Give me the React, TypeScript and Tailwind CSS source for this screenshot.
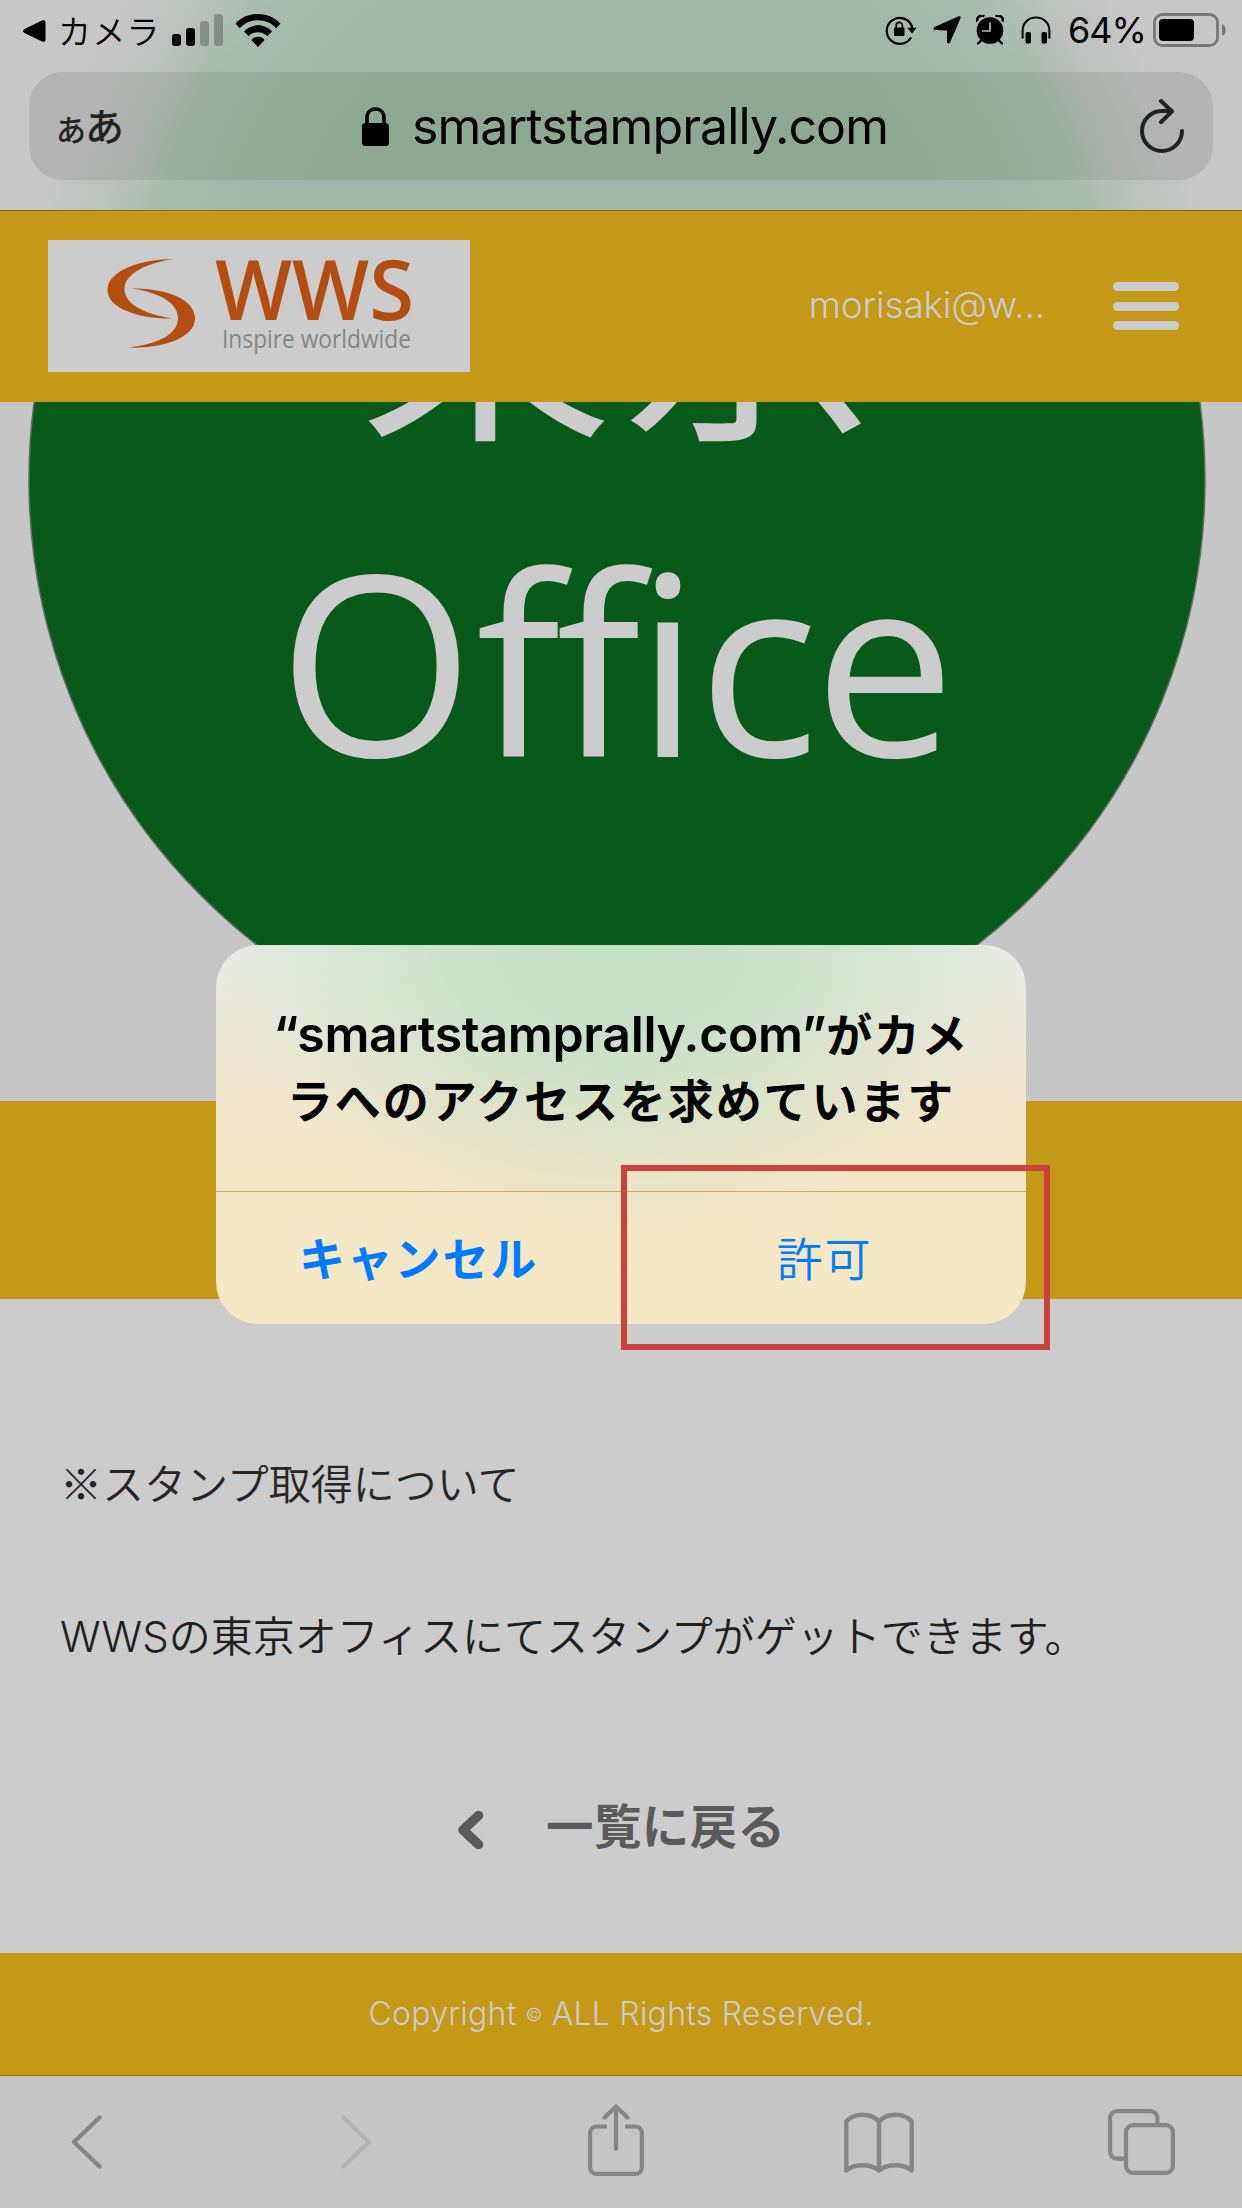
import React from "react";

interface IconProps {
  className?: string;
}

const WifiIcon = ({ className }: IconProps) => (
  <svg className={className} viewBox="0 0 46 33" fill="currentColor">
    <path d="M23 0C32 0 40 3.600 45.500 9.600L41.200 14.200C36.500 9 30 6.300 23 6.300S9.500 9 4.800 14.200L0.500 9.600C6 3.600 14 0 23 0Z" />
    <path d="M23 11.300C28.500 11.300 33.500 13.600 37 17.400L32.400 22C29.800 19.500 26.600 18.200 23 18.200S16.200 19.500 13.600 22L9 17.400C12.500 13.600 17.500 11.300 23 11.300Z" />
    <path d="M23 22.700C25.600 22.700 28 23.900 29.600 25.900L23 33L16.400 25.900C18 23.900 20.400 22.700 23 22.700Z" />
  </svg>
);

const RotationLockIcon = ({ className }: IconProps) => (
  <svg className={className} viewBox="0 0 32 30" fill="none" stroke="currentColor">
    <path d="M26 22.500A13 13 0 1 1 26.600 10.500L27.300 13" strokeWidth="2.200" />
    <path d="M22.200 12.800H31.500L27 18.500Z" fill="currentColor" stroke="none" />
    <rect x="9" y="12.500" width="10.500" height="8.500" rx="1" fill="currentColor" stroke="none" />
    <path d="M11.200 13V10.500a3.100 3.100 0 0 1 6.200 0V13" strokeWidth="1.600" />
  </svg>
);

const LocationIcon = ({ className }: IconProps) => (
  <svg className={className} viewBox="0 0 28 28" fill="currentColor">
    <path d="M25.800 0.300C27.200-.2 28 .8 27.500 2.200L17 26.600C16.300 28 14.200 27.700 14.100 26.100L13.900 14.500L2 13.900C.3 13.800-.1 11.800 1.500 11Z" />
  </svg>
);

const AlarmIcon = ({ className }: IconProps) => (
  <svg className={className} viewBox="0 0 28 30">
    <circle cx="14" cy="15.500" r="13.300" fill="currentColor" />
    <path d="M1.500 6.500C0 3 3.500-.5 8.500 1M26.500 6.500C28 3 24.500-.5 19.500 1" stroke="currentColor" strokeWidth="2.600" fill="none" />
    <path d="M5 25.500L2 28.500M23 25.500L26 28.500" stroke="currentColor" strokeWidth="2.200" strokeLinecap="round" />
    <path d="M14 7.500V16H6" stroke="#a9b8ae" strokeWidth="1.700" fill="none" />
  </svg>
);

const HeadphonesIcon = ({ className }: IconProps) => (
  <svg className={className} viewBox="0 0 30 28">
    <path d="M1.600 22.500V15C1.600 7 7.500 1.600 15 1.600S28.400 7 28.400 15V22.500" stroke="currentColor" strokeWidth="2" fill="none" />
    <rect x="4.500" y="16" width="5.500" height="11.500" rx="1.500" fill="currentColor" />
    <rect x="20.500" y="16" width="5.500" height="11.500" rx="1.500" fill="currentColor" />
  </svg>
);

const BatteryIcon = ({ className }: IconProps) => (
  <svg className={className} viewBox="0 0 74 34">
    <rect x="1.500" y="1.500" width="63" height="31" rx="8" fill="none" stroke="#777" strokeWidth="2.800" />
    <rect x="6" y="6" width="35" height="22" rx="4" fill="#000" />
    <path d="M69 11C74 13 74 21 69 23Z" fill="#777" />
  </svg>
);

const LockIcon = ({ className }: IconProps) => (
  <svg className={className} viewBox="0 0 27 39">
    <rect x="0" y="16" width="27" height="23" rx="3.500" fill="currentColor" />
    <path d="M5 17.500V11C5 5.500 8.500 2 13.500 2S22 5.500 22 11V17.500" stroke="currentColor" strokeWidth="3.600" fill="none" />
  </svg>
);

const ReloadIcon = ({ className }: IconProps) => (
  <svg className={className} viewBox="0 0 44 54" fill="none" stroke="currentColor" strokeWidth="4" strokeLinecap="round" strokeLinejoin="round">
    <path d="M42 32A20 20 0 1 1 22 12H31.500" />
    <path d="M21 2L32 12.500L21 23" />
  </svg>
);

const Logo = () => (
  <svg className="w-[422px] h-[132px] bg-[#ccc]" viewBox="0 0 422 132">
    <path
      d="M126 19C92 19 59.500 31 59.500 50C59.500 68 90 79 124 78.500C98 74 76.500 65 76.500 49C76.500 34 98 23 126 19Z"
      fill="#b34e12"
    />
    <path
      d="M84 48.500C119 48.500 147 59 147 78.500C147 98 114 109 79 107.500C106 105 130 96 130 78C130 62 109 52 84 48.500Z"
      fill="#b34e12"
    />
    <text
      x="167"
      y="80"
      fontSize="84"
      fontWeight="650"
      fill="#b34e12"
      textLength="199"
      lengthAdjust="spacingAndGlyphs"
      className="font-['Open_Sans',sans-serif]"
    >
      WWS
    </text>
    <text
      x="174"
      y="108"
      fontSize="25"
      fill="#868686"
      textLength="189"
      lengthAdjust="spacingAndGlyphs"
      className="font-['Open_Sans',sans-serif]"
    >
      Inspire worldwide
    </text>
  </svg>
);

/* Round stamp, its upper part scrolled under the header */
const Stamp = () => (
  <svg className="w-[1242px] h-[699px]" viewBox="0 402 1242 699">
    <circle cx="617" cy="480" r="588" fill="#085a1a" stroke="#5f6b60" strokeWidth="1.500" />
    <text x="358 619" y="420" fontSize="256" fill="#ccc" className="font-['Noto_Sans_CJK_JP',sans-serif]">
      東京
    </text>
    <text
      x="278 476 556 636 698 814"
      y="757"
      fontSize="252"
      fill="#ccc"
      className="font-['Open_Sans',sans-serif] [font-variant-ligatures:none]"
    >
      Office
    </text>
  </svg>
);

const signalBars = [
  "h-3 bg-black",
  "h-[18px] bg-black",
  "h-[25px] bg-black/25",
  "h-8 bg-black/25",
];

const StatusBar = () => (
  <div className="flex h-16 justify-between pl-[23px] pr-[15px] pt-[13px] text-black">
    <div className="flex h-[34px] items-center">
      <svg className="w-[23px] h-6 mt-0.5" viewBox="0 0 23 24">
        <path d="M1.500 10L19 1.500C21 .7 22.500 1.500 22.500 3.500V20.500C22.500 22.500 21 23.300 19 22.500L1.500 14C-.5 12.800-.5 11.200 1.500 10Z" />
      </svg>
      <span className="ml-3 text-[33px] leading-[34px] tracking-[1.200px] font-['Noto_Sans_CJK_JP',sans-serif] font-[350]">
        カメラ
      </span>
      <div className="ml-[11px] flex h-8 items-end gap-[5px]">
        {signalBars.map((bar) => (
          <div key={bar} className={`w-[9px] rounded-[3px] ${bar}`} />
        ))}
      </div>
      <WifiIcon className="ml-3 w-[46px] h-[33px]" />
    </div>
    <div className="flex h-[34px] items-center">
      <RotationLockIcon className="w-8 h-[30px]" />
      <LocationIcon className="ml-4 w-7 h-7" />
      <AlarmIcon className="ml-[15px] w-7 h-[30px]" />
      <HeadphonesIcon className="ml-[17px] w-[30px] h-7" />
      <span className="ml-[17px] w-[85px] whitespace-nowrap text-4xl leading-[34px] tracking-[-1px] font-['Inter',sans-serif]">
        64%
      </span>
      <BatteryIcon className="w-[74px] h-[34px]" />
    </div>
  </div>
);

const AddressBar = () => (
  <div className="mx-[29px] mt-2 flex h-[108px] items-center justify-between rounded-[34px] pl-[27px] pr-[29px] bg-[radial-gradient(circle_600px_at_592px_248px,#8da993_58%,#98ad9e_76%,#abb0ac_86%,#b4b4b4_97%)]">
    <div className="-mt-1 flex w-24 items-baseline text-[#222] font-medium leading-none font-['Noto_Sans_CJK_JP',sans-serif]">
      <span className="text-[30px]">あ</span>
      <span className="-ml-px text-[39px]">あ</span>
    </div>
    <div className="ml-2.5 flex items-center text-black">
      <LockIcon className="w-[27px] h-[39px]" />
      <span className="ml-[23px] text-[50px] leading-none tracking-[-0.900px] font-['Inter',sans-serif]">
        smartstamprally.com
      </span>
    </div>
    <div className="flex w-24 justify-end text-[#222]">
      <ReloadIcon className="w-11 h-[54px]" />
    </div>
  </div>
);

const SiteHeader = () => (
  <header className="flex h-[191px] items-start justify-between bg-[#c59918] pl-12 pr-[63px] pt-[29px]">
    <Logo />
    <div className="flex h-[132px] items-center">
      <span className="-mt-1 text-[37px] leading-none font-light tracking-[-0.200px] text-[#ccc] font-['Inter',sans-serif]">
        morisaki@w...
      </span>
      <button className="ml-[68px] flex flex-col gap-[10.500px]">
        <span className="h-[9px] w-[66px] rounded-full bg-[#ccc]" />
        <span className="h-[9px] w-[66px] rounded-full bg-[#ccc]" />
        <span className="h-[9px] w-[66px] rounded-full bg-[#ccc]" />
      </button>
    </div>
  </header>
);

const CameraDialog = () => (
  <div className="absolute left-1/2 top-[945px] flex h-[379px] w-[810px] -translate-x-1/2 flex-col overflow-hidden rounded-[42px] bg-[radial-gradient(ellipse_400px_290px_at_50%_0,#c5dec6_12%,#c5dec6c0_42%,#c5dec650_74%,#c5dec600_100%),linear-gradient(to_bottom,#e8ebe4_0%,#ebe9dc_20%,#f1e7cd_40%,#f3e7c6_60%,#f5e8c4_100%)] font-['Inter','Noto_Sans_CJK_JP',sans-serif]">
    <div className="h-[246px] pt-[56px] text-center font-semibold text-black">
      <p className="whitespace-nowrap text-[50px] leading-[66px] tracking-[-0.350px]">
        “smartstamprally.com”<span className="text-[46px] tracking-[1.500px]">がカメ</span>
      </p>
      <p className="text-[46px] leading-[66px] tracking-[1.900px]">ラへのアクセスを求めています</p>
    </div>
    <div className="grid flex-1 grid-cols-2 border-t border-[#c4ad72] pt-0.5 text-[46px] tracking-[1.800px] text-[#007aff]">
      <button className="font-semibold">キャンセル</button>
      <button className="pl-0.5 font-[350]">許可</button>
    </div>
  </div>
);

const Toolbar = () => (
  <nav className="flex h-[133px] items-start border-t border-[#8a6d1c] bg-[#c5c5c5] pl-[71px] pt-[28px] text-[#868686]">
    <svg className="mt-[11px] w-[31px] h-[54px]" viewBox="0 0 31 54" fill="none" stroke="currentColor" strokeWidth="4.500" strokeLinecap="round" strokeLinejoin="round">
      <path d="M28.500 2.500L3 27L28.500 51.500" />
    </svg>
    <svg className="ml-[239px] mt-[11px] w-[31px] h-[54px] text-[#b4b4b4]" viewBox="0 0 31 54" fill="none" stroke="currentColor" strokeWidth="4.500" strokeLinecap="round" strokeLinejoin="round">
      <path d="M2.500 2.500L28 27L2.500 51.500" />
    </svg>
    <svg className="ml-[216px] w-14 h-[72px]" viewBox="0 0 56 72" fill="none" stroke="currentColor" strokeWidth="4.200">
      <path d="M19 22.500H8.500A6.500 6.500 0 0 0 2.100 29V63.500A6.500 6.500 0 0 0 8.500 69.900H47.500A6.500 6.500 0 0 0 53.900 63.500V29A6.500 6.500 0 0 0 47.500 22.500H37" />
      <path d="M28 45V3M16.500 13.500L28 2.500L39.500 13.500" strokeLinecap="round" strokeLinejoin="round" />
    </svg>
    <svg className="ml-[200px] mt-2 w-[70px] h-[61px]" viewBox="0 0 70 61" fill="none" stroke="currentColor" strokeWidth="4.400" strokeLinejoin="round">
      <path d="M2.300 58.500V9.500C10 .5 27 .5 35 9.500C43 .5 60 .5 67.700 9.500V58.500C60 51.500 43 51.500 35 58.500C27 51.500 10 51.500 2.300 58.500ZM35 9.500V58.500" />
    </svg>
    <svg className="ml-[194px] mt-[5px] w-[67px] h-[66px]" viewBox="0 0 67 66" fill="none" stroke="currentColor" strokeWidth="4.200">
      <path d="M17 49.700H9A6.900 6.900 0 0 1 2.100 42.800V9A6.900 6.900 0 0 1 9 2.100H42.500A6.900 6.900 0 0 1 49.400 9V15.500" />
      <rect x="18" y="16.200" width="46.900" height="47.700" rx="6.900" />
    </svg>
  </nav>
);

export default function App() {
  return (
    <div className="relative flex h-[2208px] w-[1242px] flex-col overflow-hidden bg-[#ccc]">
      {/* Browser chrome */}
      <div className="h-[211px] border-b border-[#7d671f] bg-[radial-gradient(circle_600px_at_621px_320px,#a0b6a8_60%,#a7baad_78%,#bcc2be_88%,#c7c7c7_99%)]">
        <StatusBar />
        <AddressBar />
      </div>

      <SiteHeader />

      {/* Page content */}
      <main className="flex flex-1 flex-col font-['Inter','Noto_Sans_CJK_JP',sans-serif]">
        <div className="h-[699px] bg-[#c6c6c6]">
          <Stamp />
        </div>
        <div className="h-[198px] bg-[#c59918]" />
        <section className="pl-[60px] pt-[153px] text-[42px] font-[350] leading-[60px] text-[#262626]">
          <p className="font-['Noto_Sans_CJK_JP',sans-serif]">※スタンプ取得について</p>
          <p className="mt-[95px] whitespace-nowrap text-[#20201e]">
            WWSの東京オフィスにてスタンプがゲットできます。
          </p>
        </section>
        <a className="mt-[130px] flex items-center pl-[457px] text-[47.500px] font-bold leading-[60px] text-[#5a5a5a]">
          <svg className="mt-1.5 w-[27px] h-10" viewBox="0 0 27 40" fill="none" stroke="currentColor" strokeWidth="9.500" strokeLinecap="round" strokeLinejoin="round">
            <path d="M21.500 5.500L6 20L21.500 34.500" />
          </svg>
          <span className="ml-[62px] tracking-[0.400px]">一覧に戻る</span>
        </a>
      </main>

      <footer className="flex h-[122px] items-center justify-center bg-[#c59918] text-[32px] font-light tracking-[0.250px] text-[#ccc] font-['Inter',sans-serif]">
        <p>
          Copyright <span className="align-[4px] text-lg">©</span> ALL Rights Reserved.
        </p>
      </footer>

      <Toolbar />

      <CameraDialog />

      {/* Highlight around the allow button */}
      <div className="absolute left-[621px] top-[1165px] h-[185px] w-[429px] border-[6px] border-[#cd413c]" />
    </div>
  );
}
